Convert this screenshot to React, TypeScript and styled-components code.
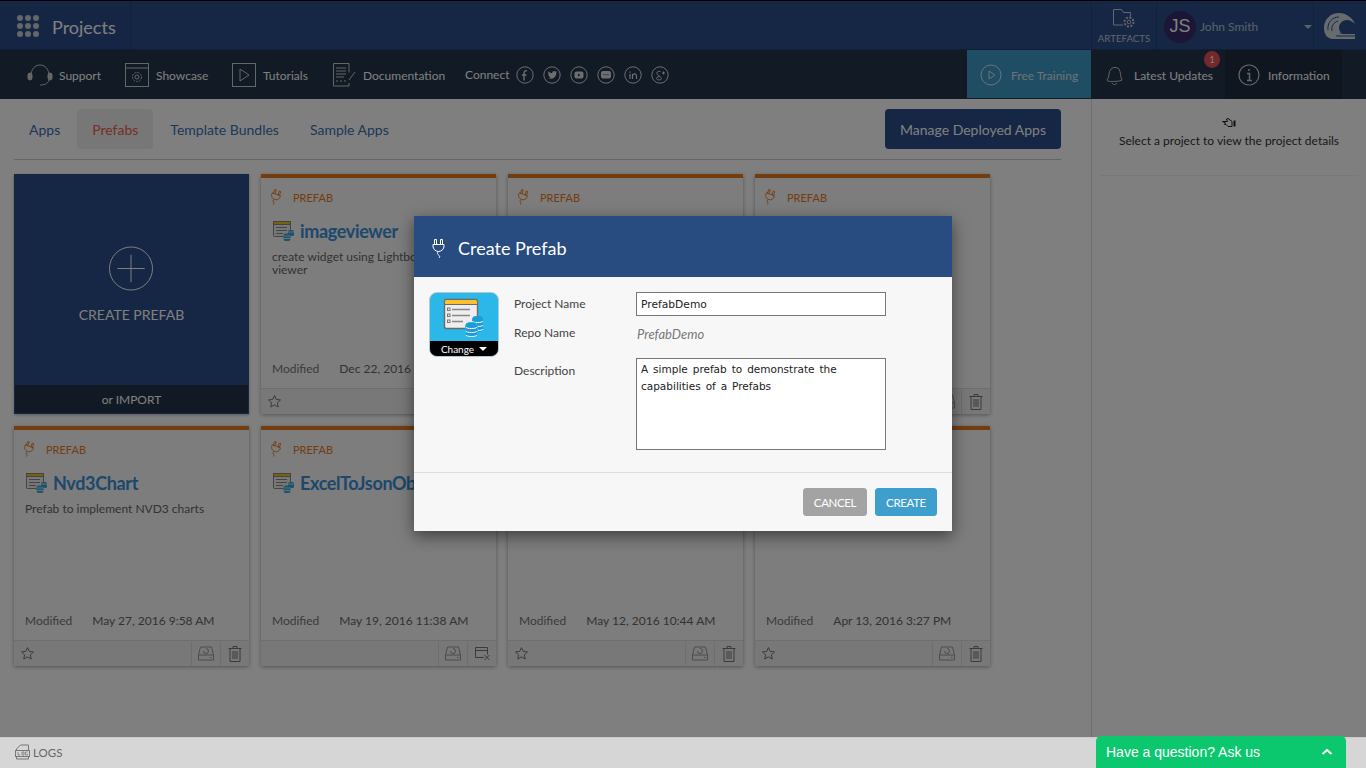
import React from "react";
import styled, { createGlobalStyle } from "styled-components";

const Global = createGlobalStyle`
  html, body { margin: 0; padding: 0; height: 100%; overflow: hidden; }
  body { font-family: Lato, "Liberation Sans", sans-serif; background: #fff; }
  #root { height: 100%; }
  * { box-sizing: border-box; }
`;

const Page = styled.div`
  position: relative;
  width: 1366px;
  height: 768px;
  display: flex;
  flex-direction: column;
  overflow: hidden;
`;

const TopBar = styled.header`
  height: 50px;
  flex: none;
  display: flex;
  background: #2a4f8a;
  border-top: 1px solid #000;
  border-bottom: 1px solid #203f70;
`;
const Brand = styled.div`
  width: 132px;
  display: flex;
  align-items: center;
  gap: 13px;
  padding: 3px 0 0 17px;
  border-right: 1px solid #234274;
  color: #fff;
  font-size: 18px;
  background: #294d88;
`;
const Dots = styled.div`
  display: grid;
  grid-template-columns: repeat(3, 6px);
  gap: 2px;
  margin-top: -2px;
  & > i { width: 6px; height: 6px; border-radius: 50%; background: #c8ccd4; display: block; }
`;
const Spacer = styled.div`
  flex: 1;
`;
const Artefacts = styled.div`
  width: 66px;
  flex: none;
  border-left: 1px solid #234274;
  border-right: 1px solid #234274;
  display: flex;
  flex-direction: column;
  align-items: center;
  padding-top: 6px;
  color: #c6ccd6;
  font-size: 9.7px;
  line-height: 12px;
  & > svg { margin-bottom: 3px; }
`;
const UserBox = styled.div`
  width: 157px;
  flex: none;
  display: flex;
  align-items: center;
  padding: 3px 0 0 7px;
  border-right: 1px solid #234274;
  color: #b9c2d0;
  font-size: 12px;
`;
const Avatar = styled.div`
  width: 32px;
  height: 32px;
  border-radius: 50%;
  background: #382a6c;
  color: #fff;
  font: 18px "Liberation Sans", sans-serif;
  display: flex;
  align-items: center;
  justify-content: center;
  margin-right: 4px;
`;
const Caret = styled.span`
  margin-left: 46px;
  width: 0;
  height: 0;
  border-left: 4px solid transparent;
  border-right: 4px solid transparent;
  border-top: 4px solid #b9c2d0;
`;
const LogoBox = styled.div`
  width: 52px;
  flex: none;
  display: flex;
  align-items: center;
  justify-content: center;
  padding-top: 1px;
`;

const NavBar = styled.nav`
  height: 49px;
  flex: none;
  display: flex;
  background: #22344a;
  color: #fff;
  font-size: 12px;
`;
const NavLeft = styled.div`
  flex: 1;
  display: flex;
  align-items: center;
  padding-left: 27px;
`;
const NavItem = styled.div<{ $w: number; $gap?: number }>`
  width: ${(p) => p.$w}px;
  display: flex;
  align-items: center;
  gap: ${(p) => p.$gap ?? 7}px;
  flex: none;
  & > span { padding-top: 1px; }
`;
const Connect = styled.div`
  display: flex;
  align-items: center;
  gap: 9px;
  & > span { margin-right: -2px; }
`;
const TrainingTab = styled.div`
  width: 124px;
  display: flex;
  align-items: center;
  gap: 9px;
  padding: 2px 0 0 13px;
  background: #3f9dc9;
  color: #d8e4ea;
  margin-bottom: 1px;
`;
const UpdatesTab = styled.div`
  width: 134px;
  display: flex;
  align-items: center;
  gap: 10px;
  padding: 1px 0 0 13px;
  position: relative;
`;
const Badge = styled.span`
  position: absolute;
  top: 1px;
  left: 113px;
  width: 16px;
  height: 17px;
  border-radius: 50%;
  background: #e8505b;
  color: #fff;
  font-size: 9px;
  display: flex;
  align-items: center;
  justify-content: center;
`;
const InfoTab = styled.div`
  width: 117px;
  display: flex;
  align-items: center;
  gap: 8px;
  padding: 1px 0 0 13px;
  background: #1e2d40;
`;
const NavEnd = styled.div`
  width: 24px;
`;

const Main = styled.main`
  flex: 1;
  display: flex;
  min-height: 0;
`;
const Content = styled.section`
  width: 1092px;
  flex: none;
  padding: 10px 30px 0 14px;
  background: #fff;
  border-right: 1px solid #ddd;
`;
const TabRow = styled.div`
  display: flex;
  align-items: center;
  height: 51px;
  padding-bottom: 11px;
  border-bottom: 1px solid #c8c8c8;
  margin-bottom: 14px;
`;
const Tab = styled.div<{ $active?: boolean; $mr: number }>`
  height: 40px;
  display: flex;
  align-items: center;
  padding: 1px 15px 0;
  margin-right: ${(p) => p.$mr}px;
  border-radius: 4px;
  font-size: 14px;
  color: ${(p) => (p.$active ? "#e8604c" : "#3a6fb0")};
  background: ${(p) => (p.$active ? "#eeeeee" : "transparent")};
`;
const ManageBtn = styled.button`
  margin-left: auto;
  width: 176px;
  height: 40px;
  border: 0;
  border-radius: 4px;
  background: #2a4e88;
  color: #fff;
  font: 14px Lato, sans-serif;
  padding: 1px 0 0;
`;
const Grid = styled.div`
  display: grid;
  grid-template-columns: repeat(4, 235px);
  grid-auto-rows: 240px;
  gap: 12px;
`;
const CreateCard = styled.div`
  background: #2a4e88;
  display: flex;
  flex-direction: column;
  color: #fff;
  box-shadow: 0 1px 3px rgba(0, 0, 0, 0.3);
`;
const CreateBody = styled.div`
  flex: 1;
  display: flex;
  flex-direction: column;
  align-items: center;
  padding-top: 72px;
  font-size: 14px;
  gap: 15px;
  & > svg { margin-left: -1px; }
`;
const ImportBar = styled.div`
  height: 28px;
  background: #223448;
  display: flex;
  align-items: center;
  justify-content: center;
  font-size: 12px;
  margin: 0 1px 1px;
`;
const Card = styled.article`
  background: #fafafa;
  border-top: 4px solid #e87a20;
  display: flex;
  flex-direction: column;
  box-shadow: 0 1px 4px rgba(0, 0, 0, 0.35);
  color: #555;
`;
const CardTag = styled.div`
  display: flex;
  align-items: center;
  gap: 11px;
  padding: 8px 0 0 9px;
  color: #e87a20;
  font-size: 11px;
  height: 30px;
`;
const CardTitle = styled.div`
  display: flex;
  align-items: center;
  gap: 5px;
  margin: 11px 0 0 12px;
  height: 24px;
  font-size: 18px;
  font-weight: 700;
  color: #3a90d8;
  letter-spacing: -0.35px;
  white-space: nowrap;
`;
const CardDesc = styled.div`
  margin: 7px 10px 0 11px;
  font-size: 12px;
  line-height: 13px;
  flex: 1;
  color: #666;
`;
const Modified = styled.div`
  display: flex;
  gap: 20px;
  padding-left: 11px;
  font-size: 12px;
  color: #777;
  height: 27px;
  white-space: nowrap;
  & > span:last-child { color: #666; }
`;
const CardFoot = styled.div`
  height: 26px;
  background: #f0f0f0;
  border-top: 1px solid #ddd;
  display: flex;
  align-items: center;
  padding-left: 6px;
  color: #777;
`;
const FootAction = styled.div`
  width: 29px;
  height: 24px;
  border-left: 1px solid #ddd;
  display: flex;
  align-items: center;
  justify-content: center;
`;

const Side = styled.aside`
  flex: 1;
  padding: 0 6px;
`;
const SideNote = styled.div`
  height: 77px;
  padding-top: 19px;
  text-align: center;
  font-size: 12px;
  color: #333;
  line-height: 15px;
  border-bottom: 1px solid #f0f0f0;
  border-radius: 4px;
  & > svg { display: block; margin: 0 auto 4px; }
`;
const Backdrop = styled.div`
  position: absolute;
  left: 0;
  top: 0;
  width: 1366px;
  height: 737px;
  background: rgba(0, 0, 0, 0.5);
`;
const Dialog = styled.div`
  position: absolute;
  left: 414px;
  top: 216px;
  width: 538px;
  height: 315px;
  background: #f7f7f7;
  box-shadow: 0 5px 15px rgba(0, 0, 0, 0.5);
  display: flex;
  flex-direction: column;
`;
const DialogHead = styled.div`
  height: 61px;
  background: #284b80;
  color: #fff;
  display: flex;
  align-items: center;
  gap: 12px;
  padding: 2px 0 0 17px;
  font-size: 18px;
`;
const DialogBody = styled.div`
  height: 196px;
  display: flex;
  padding: 15px 0 0 15px;
  border-bottom: 1px solid #ddd;
`;
const IconPicker = styled.div`
  width: 70px;
  height: 65px;
  border-radius: 8px;
  border: 1px solid #b4c8d4;
  overflow: hidden;
  background: #2bb7e8;
  display: flex;
  flex-direction: column;
  margin-right: 15px;
  flex: none;
`;
const IconArea = styled.div`
  height: 48px;
  & > svg { display: block; }
`;
const ChangeBar = styled.div`
  height: 15px;
  background: #000;
  color: #fff;
  font-size: 10px;
  display: flex;
  align-items: center;
  justify-content: center;
  gap: 5px;
`;
const ChangeCaret = styled.span`
  width: 0;
  height: 0;
  border-left: 4px solid transparent;
  border-right: 4px solid transparent;
  border-top: 4px solid #fff;
`;
const Form = styled.div`
  display: grid;
  grid-template-columns: 122px 250px;
  grid-template-rows: 24px 42px 92px;
  font-size: 12px;
  color: #444;
`;
const Label = styled.div<{ $pt: number }>`
  padding-top: ${(p) => p.$pt}px;
  line-height: 15px;
`;
const TextField = styled.input`
  width: 250px;
  height: 24px;
  border: 1px solid #777;
  padding: 0 4px;
  background: #fff;
  color: #222;
  font: 10.7px "DejaVu Sans", sans-serif;
  outline: none;
`;
const RepoValue = styled.div`
  font-style: italic;
  font-size: 13px;
  color: #777;
  padding: 11px 0 0 1px;
  line-height: 14px;
`;
const TextArea = styled.textarea`
  width: 250px;
  height: 92px;
  border: 1px solid #777;
  padding: 2px 4px;
  background: #fff;
  color: #222;
  font: 10.5px/17px "DejaVu Sans", sans-serif;
  word-spacing: 1.6px;
  resize: none;
  outline: none;
  display: block;
`;
const DialogFoot = styled.div`
  flex: 1;
  display: flex;
  justify-content: flex-end;
  gap: 8px;
  padding: 15px 15px 0 0;
`;
const ModalBtn = styled.button<{ $bg: string; $w: number }>`
  width: ${(p) => p.$w}px;
  height: 28px;
  border: 1px solid ${(p) => p.$bg};
  border-radius: 3px;
  background: ${(p) => p.$bg};
  color: #fff;
  font: 11.5px Lato, sans-serif;
  letter-spacing: -0.35px;
  padding: 0;
`;
const Footer = styled.footer`
  height: 31px;
  flex: none;
  background: #d6d6d6;
  border-top: 1px solid #ccc;
  display: flex;
  align-items: center;
  padding: 0 0 2px 15px;
  gap: 3px;
  color: #666;
  font-size: 11.5px;
`;
const Chat = styled.div`
  position: absolute;
  left: 1096px;
  bottom: 0;
  width: 250px;
  height: 32px;
  background: #0bc86f;
  border-radius: 5px 5px 0 0;
  color: #fff;
  font: 14px "Liberation Sans", sans-serif;
  display: flex;
  align-items: center;
  justify-content: space-between;
  padding: 0 12px 0 10px;
`;

const ic = { fill: "none", stroke: "currentColor", strokeWidth: 1 } as const;

const Plug = ({ s = 20, c = "currentColor", tilt = 0 }: { s?: number; c?: string; tilt?: number }) => (
  <svg width={s * 0.75} height={s} viewBox="0 0 15 20" fill="none" stroke={c} strokeWidth="1">
    <g transform={`rotate(${tilt} 7.500 8)`}>
      <path d="M3.500 1.500h2v5h-2zM9.500 1.500h2v5h-2z" />
      <path d="M2 6.500h11v1.500a5.500 5.500 0 0 1-11 0V6.500z" />
      <path d="M7.500 13.500c-1.500 1.500-1.500 2.500 0 3.500s1.500 2 .5 3" />
    </g>
  </svg>
);
const ProjectIcon = ({ s = 22 }: { s?: number }) => (
  <svg width={s} height={s} viewBox="0 0 22 22">
    <rect x="0.500" y="1.500" width="17" height="15" rx="1" fill="#eee" stroke="#888" />
    <rect x="0.500" y="1.500" width="17" height="3" fill="#f5c518" stroke="#888" />
    <path d="M3 7.500h11M3 10.500h11M3 13.500h7" stroke="#888" />
    <rect x="15" y="10" width="6" height="6" rx="1.500" fill="#3aa7d8" />
    <path d="M15 12h6" stroke="#fff" strokeWidth="0.700" />
    <rect x="10.500" y="13.500" width="7" height="7.500" rx="2" fill="#3aa7d8" />
    <path d="M10.500 16h7M10.500 18.500h7" stroke="#fff" strokeWidth="0.700" />
  </svg>
);
const Star = () => (
  <svg width="15" height="15" viewBox="0 0 24 24" {...ic} strokeWidth={1.6}>
    <path d="M12 2.500l2.900 6.200 6.700.8-5 4.600 1.400 6.700-6-3.400-6 3.400 1.400-6.700-5-4.600 6.700-.8z" />
  </svg>
);
const Drive = () => (
  <svg width="16" height="15" viewBox="0 0 16 15" {...ic} stroke="#999">
    <path d="M2.500 1h11l2 8v5H.5V9zM.5 9h15" />
    <path d="M5.500 5a2.500 2.500 0 1 0 2.500-2.500M12 11.500h1.500" />
  </svg>
);
const Trash = () => (
  <svg width="14" height="16" viewBox="0 0 14 16" {...ic}>
    <path d="M.5 2.500h13M5 2.500V.5h4v2M2 2.500v13h10v-13M5 5v8M7 5v8M9 5v8" />
  </svg>
);
const Unshare = () => (
  <svg width="15" height="14" viewBox="0 0 15 14" {...ic}>
    <path d="M9 10.500H.5V.5h12v7M.5 3.500h12M9.500 8l5 5M14.500 8l-5 5" />
  </svg>
);
const Round = ({ children }: { children: React.ReactNode }) => (
  <svg width="18" height="18" viewBox="0 0 18 18" fill="none" stroke="#ddd">
    <circle cx="9" cy="9" r="8.200" />
    {children}
  </svg>
);

type P = { title: string; desc: string; date: string; action?: "unshare"; star?: boolean };
const projects: P[] = [
  { title: "imageviewer", desc: "create widget using Lightbox image viewer", date: "Dec 22, 2016 4:15 PM" },
  { title: "", desc: "", date: "Nov 30, 2016 2:48 PM" },
  { title: "", desc: "", date: "Oct 20, 2016 5:22 PM" },
  { title: "Nvd3Chart", desc: "Prefab to implement NVD3 charts", date: "May 27, 2016 9:58 AM" },
  { title: "ExcelToJsonObject", desc: "", date: "May 19, 2016 11:38 AM", action: "unshare", star: false },
  { title: "", desc: "", date: "May 12, 2016 10:44 AM" },
  { title: "", desc: "", date: "Apr 13, 2016 3:27 PM" },
];

const ProjectCard = ({ p }: { p: P }) => (
  <Card>
    <CardTag>
      <Plug s={16} tilt={20} />
      PREFAB
    </CardTag>
    <CardTitle>
      <ProjectIcon />
      {p.title}
    </CardTitle>
    <CardDesc>{p.desc}</CardDesc>
    <Modified>
      <span>Modified</span>
      <span>{p.date}</span>
    </Modified>
    <CardFoot>
      {p.star !== false && <Star />}
      <Spacer />
      <FootAction>
        <Drive />
      </FootAction>
      <FootAction>{p.action === "unshare" ? <Unshare /> : <Trash />}</FootAction>
    </CardFoot>
  </Card>
);

export default function App() {
  return (
    <Page>
      <Global />
      <TopBar>
        <Brand>
          <Dots>
            {Array.from({ length: 9 }).map((_, i) => (
              <i key={i} />
            ))}
          </Dots>
          Projects
        </Brand>
        <Spacer />
        <Artefacts>
          <svg width="24" height="22" viewBox="0 0 24 22" fill="none" stroke="#c6ccd6">
            <path d="M11 18H1.500V2.500h8l2 3h7v4" />
            <circle cx="17" cy="15" r="4.500" strokeDasharray="2 1.500" strokeWidth="2" />
            <circle cx="17" cy="15" r="1.800" />
          </svg>
          ARTEFACTS
        </Artefacts>
        <UserBox>
          <Avatar>JS</Avatar>
          John Smith
          <Caret />
        </UserBox>
        <LogoBox>
          <svg width="34" height="28" viewBox="0 0 34 28">
            <path d="M1 16C1 7 8 1 16 1c7 0 13 4 16 11-2-2-5-4-8-4-5 0-8 4-8 8 0 3 2 5 4 6h12v5H10C5 27 1 23 1 16z" fill="#cfd6de" />
            <path d="M5 18c-1-7 4-13 11-13M9 19c-1-5 2-9 6-10" fill="none" stroke="#2a4f8a" strokeWidth="1" />
            <path d="M13 24h20M17 21h14" stroke="#2a4f8a" strokeWidth="1" />
          </svg>
        </LogoBox>
      </TopBar>
      <NavBar>
        <NavLeft>
          <NavItem $w={98} $gap={6}>
            <svg width="26" height="24" viewBox="0 0 26 24" fill="none" stroke="#ccc">
              <path d="M4 13C4 6 8 2 13 2s9 4 9 11M13 22c4 0 8-1 9-5" />
              <rect x="1" y="10" width="4" height="7" rx="2" fill="#ccc" />
              <rect x="21" y="10" width="4" height="7" rx="2" fill="#ccc" />
            </svg>
            <span>Support</span>
          </NavItem>
          <NavItem $w={107}>
            <svg width="24" height="24" viewBox="0 0 24 24" fill="none" stroke="#ccc">
              <rect x="0.500" y="0.500" width="23" height="23" />
              <path d="M.5 5h23" />
              <circle cx="12" cy="14" r="4.500" strokeDasharray="2 1" />
              <circle cx="12" cy="14" r="2" />
            </svg>
            <span>Showcase</span>
          </NavItem>
          <NavItem $w={101}>
            <svg width="24" height="24" viewBox="0 0 24 24" fill="none" stroke="#ccc">
              <rect x="0.500" y="0.500" width="23" height="23" />
              <path d="M8 6l9 6-9 6z" />
            </svg>
            <span>Tutorials</span>
          </NavItem>
          <NavItem $w={132} $gap={6}>
            <svg width="24" height="24" viewBox="0 0 24 24" fill="none" stroke="#ccc">
              <path d="M16 20v3H.5V.5H16v9" />
              <path d="M3 5h10M3 8h10M3 11h10M3 14h8M3 18h2M7 18h2M11 18h2M16 17l6-8" />
            </svg>
            <span>Documentation</span>
          </NavItem>
          <Connect>
            <span>Connect</span>
            <Round>
              <path d="M8 14.500V7.500c0-2 1-3 3-2.800M6 9h4.500" strokeWidth="1.400" />
            </Round>
            <Round>
              <path d="M4.500 12.500c4.500 1.500 9-1 8.800-6l1-1-1.500.2c-1-1.300-3.800-.7-3.500 1.500-1.500 0-3-1-4-2-.5 1.500 0 2.500.7 3.200l-.8-.1c0 1 .7 2 1.800 2.200l-.8.2c.3.800 1 1.200 2 1.200-1 .6-2.500.8-3.700.6z" fill="#ddd" stroke="none" />
            </Round>
            <Round>
              <rect x="4.500" y="5.500" width="9" height="7" rx="2" fill="#ddd" stroke="none" />
              <path d="M8 7.500l2.500 1.500L8 10.500z" fill="#22344a" stroke="none" />
            </Round>
            <Round>
              <rect x="4" y="5" width="10" height="7.500" rx="2" fill="#ddd" stroke="none" />
              <path d="M6.500 8.700h5" stroke="#22344a" strokeDasharray="1 1" />
            </Round>
            <Round>
              <path d="M6 8v5M6 5.500v1.200M8.500 13V8M8.500 10c0-2.500 4-3 4 0v3" strokeWidth="1.200" />
            </Round>
            <Round>
              <path d="M9.500 5.500c-3-1-4 1-3.500 2.500.4 1.200 2.500 1.500 2.500 2.200 0 .6-3 .5-3 2.300s5 2 5 0c0-1-2-1.500-2-2.500M12.500 5.500v3M11 7h3" />
            </Round>
          </Connect>
        </NavLeft>
        <TrainingTab>
          <svg width="22" height="22" viewBox="0 0 22 22" fill="none" stroke="#d8e4ea">
            <circle cx="11" cy="11" r="10" />
            <path d="M9 7l6 4-6 4z" />
          </svg>
          Free Training
        </TrainingTab>
        <UpdatesTab>
          <svg width="20" height="21" viewBox="0 0 20 21" fill="none" stroke="#ccc">
            <path d="M3 15c3-3 1-8 4-11 2-2 6-2 8 0 2 3 1 8 3 11 0 1-15 3-15 0zM8 18c1 2 4 2 5 0" />
          </svg>
          Latest Updates
          <Badge>1</Badge>
        </UpdatesTab>
        <InfoTab>
          <svg width="22" height="22" viewBox="0 0 22 22" fill="none" stroke="#ccc" strokeWidth="1.200">
            <circle cx="11" cy="11" r="10" />
            <path d="M9 9.500h2.500V16M9 16.500h5M11 5v2" strokeWidth="1.500" />
          </svg>
          Information
        </InfoTab>
        <NavEnd />
      </NavBar>
      <Main>
        <Content>
          <TabRow>
            <Tab $mr={2}>Apps</Tab>
            <Tab $active $mr={2}>Prefabs</Tab>
            <Tab $mr={1}>Template Bundles</Tab>
            <Tab $mr={0}>Sample Apps</Tab>
            <ManageBtn>Manage Deployed Apps</ManageBtn>
          </TabRow>
          <Grid>
            <CreateCard>
              <CreateBody>
                <svg width="46" height="45" viewBox="0 0 46 46" fill="none" stroke="#fff">
                  <circle cx="23" cy="23" r="22" />
                  <path d="M9 23h28M23 9v28" />
                </svg>
                CREATE PREFAB
              </CreateBody>
              <ImportBar>or IMPORT</ImportBar>
            </CreateCard>
            {projects.map((p, i) => (
              <ProjectCard key={i} p={p} />
            ))}
          </Grid>
        </Content>
        <Side>
          <SideNote>
            <svg width="15" height="11" viewBox="0 0 15 11" fill="none" stroke="#222">
              <path d="M.5 3.500h5L4.500 1 6 .5l4 3v5H6L4 6.500H2.500L3.500 5z" />
              <path d="M12.500 2.500v6" strokeWidth="2" />
            </svg>
            Select a project to view the project details
          </SideNote>
        </Side>
      </Main>
      <Footer>
        <svg width="15" height="16" viewBox="0 0 15 16" fill="none" stroke="#777">
          <path d="M1.500 5l4-4h8v14h-12z" />
          <rect x="0.500" y="6.500" width="14" height="6" fill="#d6d6d6" />
          <path d="M3 8v3h2M7 8h2v3H7zM12.500 8h-2v3h2v-1" strokeWidth="0.800" />
        </svg>
        LOGS
      </Footer>
      <Backdrop />
      <Dialog>
        <DialogHead>
          <Plug s={20} c="#fff" />
          Create Prefab
        </DialogHead>
        <DialogBody>
          <IconPicker>
            <IconArea>
              <svg width="68" height="48" viewBox="0 0 68 48">
                <rect x="14.500" y="6.500" width="33" height="29" rx="2" fill="#eee" stroke="#6a6a6a" strokeWidth="1.400" />
                <path d="M14.500 11.500V8.500a2 2 0 0 1 2-2h29a2 2 0 0 1 2 2v3z" fill="#fbc02d" stroke="#6a6a6a" />
                <path d="M22 16.500h18M22 22.500h18M22 28.500h11" stroke="#888" strokeWidth="1.300" />
                <rect x="17.500" y="15" width="2.500" height="2.500" fill="none" stroke="#777" />
                <rect x="17.500" y="21" width="2.500" height="2.500" fill="none" stroke="#777" />
                <rect x="17.500" y="27" width="2.500" height="2.500" fill="none" stroke="#777" />
                <rect x="42" y="23" width="11" height="16" rx="4" fill="#1e9ad8" />
                <path d="M42 28c0 2 11 2 11 0M42 32c0 2 11 2 11 0M42 36c0 2 11 2 11 0" stroke="#fff" fill="none" />
                <rect x="35.500" y="29.500" width="12" height="15" rx="4" fill="#1e9ad8" stroke="#2bb7e8" />
                <path d="M36 34c0 2 11 2 11 0M36 38c0 2 11 2 11 0M36 42c0 2 11 2 11 0" stroke="#fff" fill="none" />
              </svg>
            </IconArea>
            <ChangeBar>
              Change <ChangeCaret />
            </ChangeBar>
          </IconPicker>
          <Form>
            <Label $pt={4}>Project Name</Label>
            <TextField defaultValue="PrefabDemo" />
            <Label $pt={9}>Repo Name</Label>
            <RepoValue>PrefabDemo</RepoValue>
            <Label $pt={5}>Description</Label>
            <TextArea defaultValue={"A simple prefab to demonstrate the\ncapabilities of a Prefabs"} />
          </Form>
        </DialogBody>
        <DialogFoot>
          <ModalBtn $bg="#a3a3a3" $w={64}>CANCEL</ModalBtn>
          <ModalBtn $bg="#3e9fcd" $w={62}>CREATE</ModalBtn>
        </DialogFoot>
      </Dialog>
      <Chat>
        Have a question? Ask us
        <svg width="14" height="14" viewBox="0 0 14 14" fill="none" stroke="#fff" strokeWidth="2">
          <path d="M2.500 9l4.500-4 4.500 4" />
        </svg>
      </Chat>
    </Page>
  );
}
